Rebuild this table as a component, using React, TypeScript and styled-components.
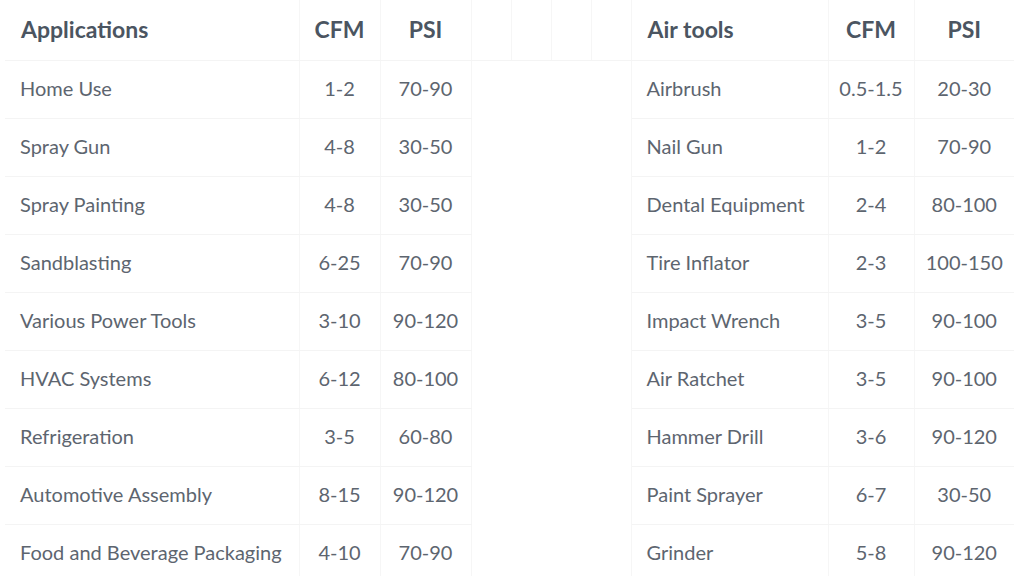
import React from "react";
import styled, { createGlobalStyle } from "styled-components";

const Global = createGlobalStyle`
  html, body { margin: 0; padding: 0; background: #ffffff; }
  body { font-family: Lato, "Noto Sans", sans-serif; }
`;

const Page = styled.div`
  padding: 0 10px 0 5px;
  background: #fff;
  height: 576px;
  overflow: hidden;
`;

const Table = styled.table`
  border-collapse: collapse;
  table-layout: fixed;
  width: 1009px;
`;

const HeadCell = styled.th<{ $align?: "left" | "center"; $last?: boolean }>`
  height: 60px;
  box-sizing: border-box;
  padding: 0 ${(p) => (p.$align === "left" ? "16px" : "0")} 2px;
  text-align: ${(p) => p.$align ?? "center"};
  font-size: 23px;
  font-weight: 700;
  color: #4b5561;
  border-bottom: 1px solid #f4f4f4;
  border-right: ${(p) => (p.$last ? "none" : "1px solid #f6f6f6")};
  vertical-align: middle;
  white-space: nowrap;
`;

const Cell = styled.td<{ $align?: "left" | "center"; $last?: boolean }>`
  height: 58px;
  box-sizing: border-box;
  padding: 0 ${(p) => (p.$align === "left" ? "15px" : "0")} 3px;
  text-align: ${(p) => p.$align ?? "center"};
  font-size: 20px;
  font-weight: 400;
  color: #5d656f;
  border-bottom: 1px solid #f4f4f4;
  border-right: ${(p) => (p.$last ? "none" : "1px solid #f6f6f6")};
  vertical-align: middle;
  white-space: nowrap;
`;

const Gap = styled.td`
  border-right: 1px solid #f6f6f6;
  border-bottom: none;
`;

const apps: [string, string, string][] = [
  ["Home Use", "1-2", "70-90"],
  ["Spray Gun", "4-8", "30-50"],
  ["Spray Painting", "4-8", "30-50"],
  ["Sandblasting", "6-25", "70-90"],
  ["Various Power Tools", "3-10", "90-120"],
  ["HVAC Systems", "6-12", "80-100"],
  ["Refrigeration", "3-5", "60-80"],
  ["Automotive Assembly", "8-15", "90-120"],
  ["Food and Beverage Packaging", "4-10", "70-90"],
];

const tools: [string, string, string][] = [
  ["Airbrush", "0.5-1.5", "20-30"],
  ["Nail Gun", "1-2", "70-90"],
  ["Dental Equipment", "2-4", "80-100"],
  ["Tire Inflator", "2-3", "100-150"],
  ["Impact Wrench", "3-5", "90-100"],
  ["Air Ratchet", "3-5", "90-100"],
  ["Hammer Drill", "3-6", "90-120"],
  ["Paint Sprayer", "6-7", "30-50"],
  ["Grinder", "5-8", "90-120"],
];

const widths = [294, 81, 91, 40, 40, 40, 40, 197, 86, 100];

export default function App() {
  return (
    <>
      <Global />
      <Page>
        <Table>
          <colgroup>
            {widths.map((w, i) => (
              <col key={i} style={{ width: w }} />
            ))}
          </colgroup>
          <thead>
            <tr>
              <HeadCell $align="left">Applications</HeadCell>
              <HeadCell>CFM</HeadCell>
              <HeadCell>PSI</HeadCell>
              <HeadCell />
              <HeadCell />
              <HeadCell />
              <HeadCell />
              <HeadCell $align="left">Air tools</HeadCell>
              <HeadCell>CFM</HeadCell>
              <HeadCell $last>PSI</HeadCell>
            </tr>
          </thead>
          <tbody>
            {apps.map((a, i) => {
              const t = tools[i];
              return (
                <tr key={a[0]}>
                  <Cell $align="left">{a[0]}</Cell>
                  <Cell>{a[1]}</Cell>
                  <Cell>{a[2]}</Cell>
                  {i === 0 && <Gap colSpan={4} rowSpan={apps.length} />}
                  <Cell $align="left">{t[0]}</Cell>
                  <Cell>{t[1]}</Cell>
                  <Cell $last>{t[2]}</Cell>
                </tr>
              );
            })}
          </tbody>
        </Table>
      </Page>
    </>
  );
}
